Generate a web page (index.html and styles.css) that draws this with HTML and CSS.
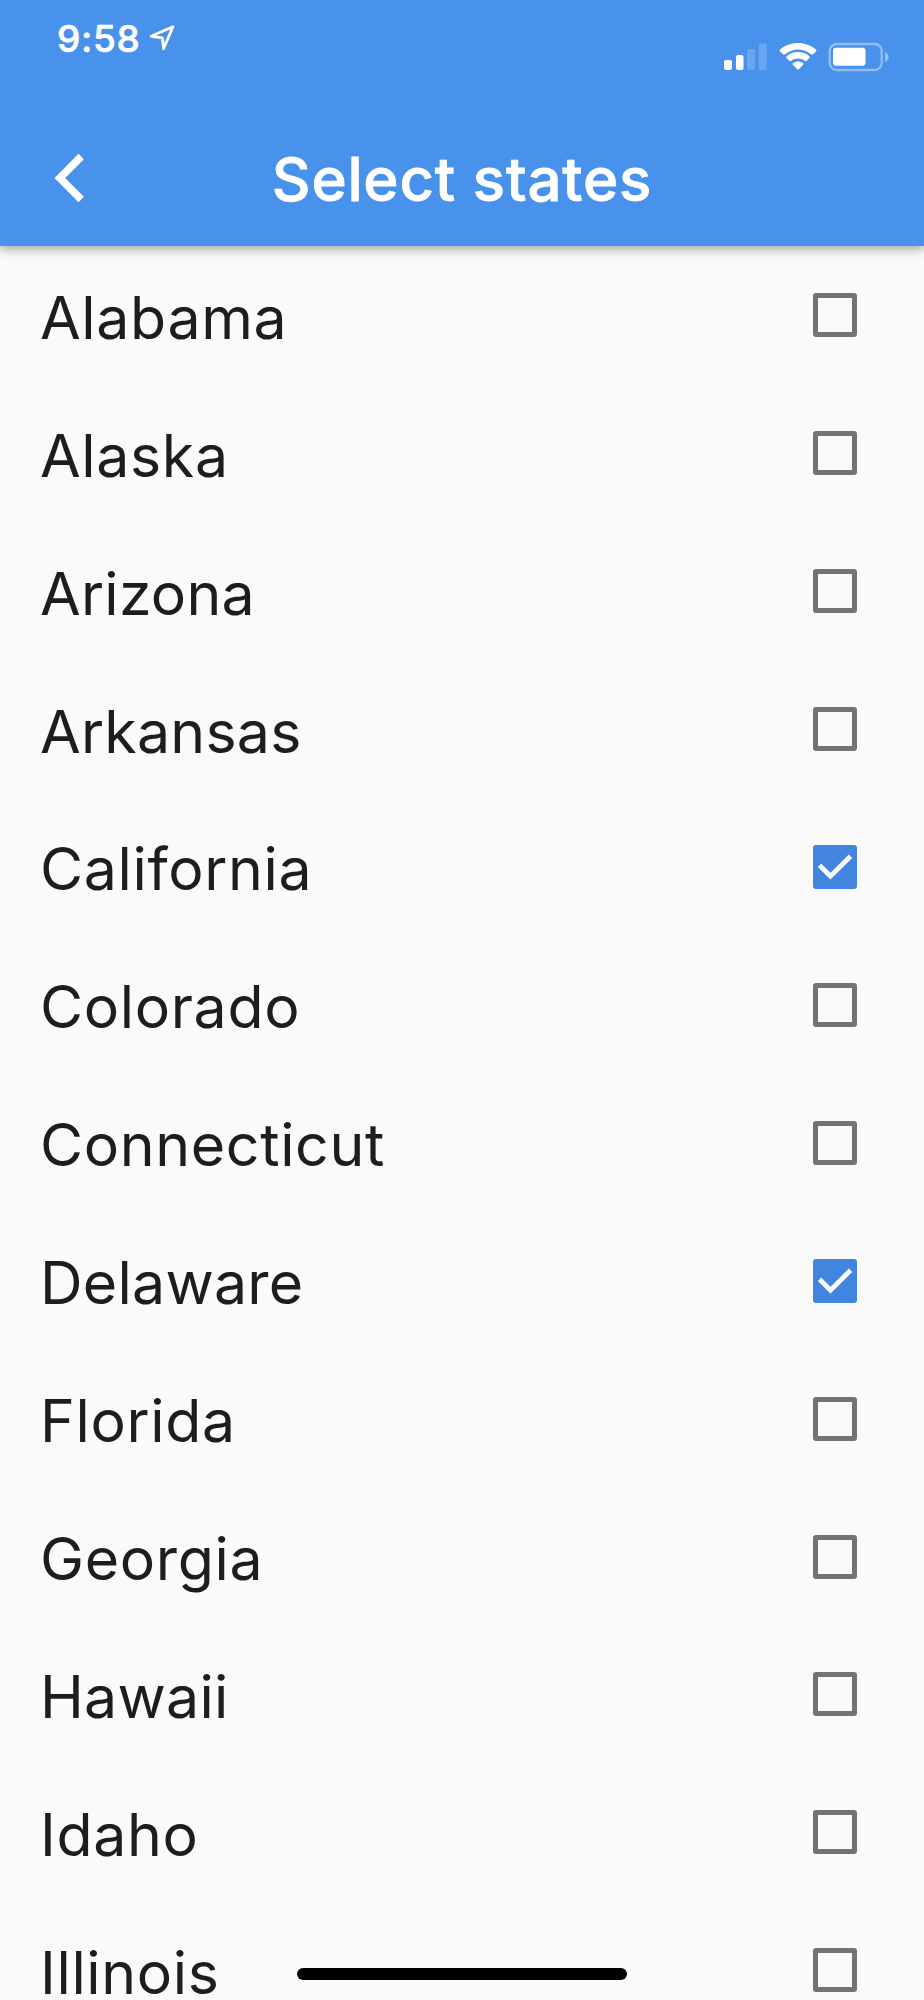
FILE: index.html
```html
<!DOCTYPE html>
<html lang="en">
<head>
<meta charset="utf-8">
<title>Select states</title>
<link rel="stylesheet" href="styles.css">
</head>
<body>
<div class="screen">
  <header class="header">
    <div class="status">
      <div class="clock">
        <span class="time">9:58</span>
        <svg class="location" width="27" height="27" viewBox="0 0 27 27"><path d="M2.2 11.3 23.9 1.8 14.6 23.8 13.4 12.9Z"/></svg>
      </div>
      <div class="indicators">
        <svg width="44" height="28" viewBox="0 0 44 28" fill="#fff"><rect x="0" y="17" width="8" height="10" rx="2"/><rect x="12" y="12" width="7.5" height="15" rx="2"/><g opacity=".18"><rect x="23" y="6" width="8" height="21" rx="2"/><rect x="34.700" y="0.500" width="8" height="26.500" rx="2"/></g></svg>
        <svg width="38" height="28" viewBox="0 0 38 28" fill="#fff"><path d="M1 8.500Q0 7.500 1 6.700C11-2.200 27-2.200 37 6.700Q38 7.500 37 8.500L34 11.300Q33 12 32 11.200C24.500 4.900 13.500 4.900 6 11.200Q5 12 4 11.300Z"/><path d="M7.500 15Q6.600 14.200 7.600 13.300C14 7.700 24 7.700 30.400 13.300Q31.400 14.200 30.500 15L27.700 17.800Q26.800 18.700 25.800 17.800C22 14.700 16 14.700 12.200 17.800Q11.200 18.700 10.300 17.800Z"/><path d="M13.800 21.700Q13 20.800 14 20.100C17 18 21 18 24 20.100Q25 20.800 24.200 21.700L19.800 26.200Q19 27 18.200 26.200Z"/></svg>
        <svg class="battery" width="62" height="30" viewBox="0 0 62 30" fill="#fff"><rect x="1.700" y="2" width="52" height="26" rx="7" fill="none" stroke="#fff" stroke-opacity=".4" stroke-width="2.300"/><rect x="5" y="5.700" width="32.500" height="18" rx="3"/><path d="M57 10Q60.500 11.500 60.500 15T57 20Z" opacity=".45"/></svg>
      </div>
    </div>
    <div class="appbar">
      <svg class="back" width="30" height="50" viewBox="0 0 30 50"><path d="M27.200 3.500 5.800 25 27.200 46.500"/></svg>
      <h1 class="title">Select states</h1>
    </div>
  </header>
  <main class="list">
    <label class="row"><span class="name">Alabama</span><span class="box"></span></label>
    <label class="row"><span class="name">Alaska</span><span class="box"></span></label>
    <label class="row"><span class="name tight">Arizona</span><span class="box"></span></label>
    <label class="row"><span class="name tight">Arkansas</span><span class="box"></span></label>
    <label class="row"><span class="name">California</span><span class="box checked"><svg width="44" height="44" viewBox="0 0 44 44"><path d="M6.500 20.200 17.500 31.200 37.500 11.200"/></svg></span></label>
    <label class="row"><span class="name">Colorado</span><span class="box"></span></label>
    <label class="row"><span class="name">Connecticut</span><span class="box"></span></label>
    <label class="row"><span class="name tight">Delaware</span><span class="box checked"><svg width="44" height="44" viewBox="0 0 44 44"><path d="M6.500 20.200 17.500 31.200 37.500 11.200"/></svg></span></label>
    <label class="row"><span class="name">Florida</span><span class="box"></span></label>
    <label class="row"><span class="name">Georgia</span><span class="box"></span></label>
    <label class="row"><span class="name tight">Hawaii</span><span class="box"></span></label>
    <label class="row"><span class="name">Idaho</span><span class="box"></span></label>
    <label class="row"><span class="name">Illinois</span><span class="box"></span></label>
  </main>
  <div class="home"></div>
</div>
</body>
</html>
```

FILE: styles.css
```css
* { box-sizing: border-box; }
body { margin: 0; font-family: Inter, "Liberation Sans", sans-serif; }
svg { display: block; flex: none; }
.screen {
  position: relative;
  display: flex;
  flex-direction: column;
  width: 924px;
  height: 2000px;
  overflow: hidden;
  background: #fafafa;
}
.header {
  z-index: 1;
  flex: none;
  height: 246.4px;
  background: #4892ec;
  color: #fff;
  box-shadow: 0 5px 10px rgba(0, 0, 0, .2), 0 2px 7px rgba(0, 0, 0, .14);
}
.status {
  display: flex;
  justify-content: space-between;
  height: 112px;
  padding: 17px 34px 0 57px;
}
.clock { display: flex; align-items: flex-start; gap: 8px; }
.time {
  font-size: 37px;
  line-height: 44px;
  font-weight: 500;
  letter-spacing: .7px;
  -webkit-text-stroke: .6px #fff;
}
.location { margin-top: 8px; fill: none; stroke: #fff; stroke-width: 2.800; stroke-linejoin: round; }
.indicators { display: flex; align-items: flex-start; gap: 11px; padding-top: 26px; }
.battery { margin-top: -1px; }
.appbar { display: flex; align-items: center; height: 134px; padding-left: 54px; }
.back { margin-bottom: 3px; fill: none; stroke: #fff; stroke-width: 7.500; }
.title {
  flex: 1;
  margin: 0 84px 0 0;
  font-size: 60px;
  font-weight: 500;
  line-height: 72px;
  text-align: center;
  letter-spacing: .8px;
  -webkit-text-stroke: .8px #fff;
}
.list { display: flex; flex-direction: column; }
.row {
  display: flex;
  flex: none;
  align-items: center;
  justify-content: space-between;
  height: 137.91px;
  padding: 0 67px 0 40px;
}
.name {
  padding-top: 5px;
  color: #1d1d1d;
  font-size: 59px;
  font-weight: 400;
  line-height: 72px;
  letter-spacing: .65px;
}
.tight { letter-spacing: .25px; }
.box { flex: none; width: 44px; height: 44px; border: 5px solid #737373; border-radius: 3px; }
.checked { border: 0; background: #4285de; }
.checked path { fill: none; stroke: #fff; stroke-width: 4.800; }
.home {
  position: absolute;
  bottom: 20px;
  left: 297px;
  width: 330px;
  height: 12px;
  border-radius: 6px;
  background: #000;
}
```
